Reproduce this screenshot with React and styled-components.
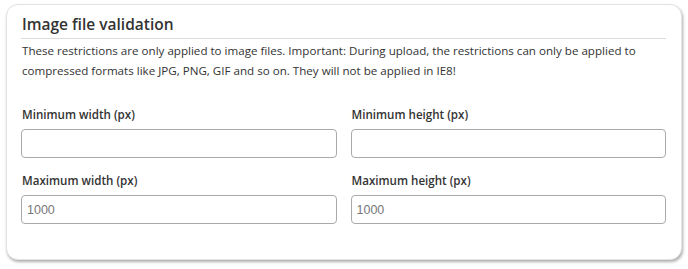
import React from "react";
import styled, { createGlobalStyle } from "styled-components";

const GlobalStyle = createGlobalStyle`
  html, body {
    margin: 0;
    padding: 0;
    background: #ffffff;
  }
  body {
    font-family: "Open Sans", "Noto Sans", sans-serif;
    color: #333333;
  }
`;

const Page = styled.div`
  padding: 4px 6px 8px 6px;
`;

const Card = styled.section`
  box-sizing: border-box;
  width: 676px;
  height: 256px;
  border: 1px solid #e3e3e3;
  border-radius: 12px;
  box-shadow: 1px 2px 3px rgba(0, 0, 0, 0.32);
  background: #ffffff;
  padding: 7px 15px 0 14px;
`;

const Title = styled.h2`
  margin: 0;
  font-size: 15.5px;
  font-weight: 600;
  line-height: 24px;
  color: #333333;
  padding: 0 0 2px 1px;
  border-bottom: 1px solid #dddddd;
`;

const Description = styled.p`
  margin: 2px 0 0 1px;
  font-size: 11.6px;
  line-height: 20px;
  color: #333333;
`;

const Grid = styled.div`
  display: grid;
  grid-template-columns: 1fr 1fr;
  column-gap: 14px;
  row-gap: 0;
  margin-top: 26px;
`;

const Field = styled.div`
  display: flex;
  flex-direction: column;
  margin-bottom: 15px;
`;

const Label = styled.label`
  font-size: 11.6px;
  font-weight: 600;
  line-height: 16px;
  color: #333333;
  padding-left: 1px;
  margin-bottom: 6px;
`;

const Input = styled.input`
  box-sizing: border-box;
  width: 100%;
  height: 29px;
  border: 1px solid #aaaaaa;
  border-radius: 4px;
  padding: 0 5px;
  font-family: "Liberation Sans", Arial, sans-serif;
  font-size: 12.5px;
  color: #333333;
  background: #ffffff;
  outline: none;
  &::placeholder {
    color: #777777;
  }
`;

const fields = [
  { label: "Minimum width (px)", placeholder: "" },
  { label: "Minimum height (px)", placeholder: "" },
  { label: "Maximum width (px)", placeholder: "1000" },
  { label: "Maximum height (px)", placeholder: "1000" },
];

export default function App() {
  return (
    <>
      <GlobalStyle />
      <Page>
        <Card>
          <Title>Image file validation</Title>
          <Description>
            These restrictions are only applied to image files. Important: During upload, the
            restrictions can only be applied to compressed formats like JPG, PNG, GIF and so on.
            They will not be applied in IE8!
          </Description>
          <Grid>
            {fields.map((f) => (
              <Field key={f.label}>
                <Label>{f.label}</Label>
                <Input type="text" placeholder={f.placeholder} />
              </Field>
            ))}
          </Grid>
        </Card>
      </Page>
    </>
  );
}
